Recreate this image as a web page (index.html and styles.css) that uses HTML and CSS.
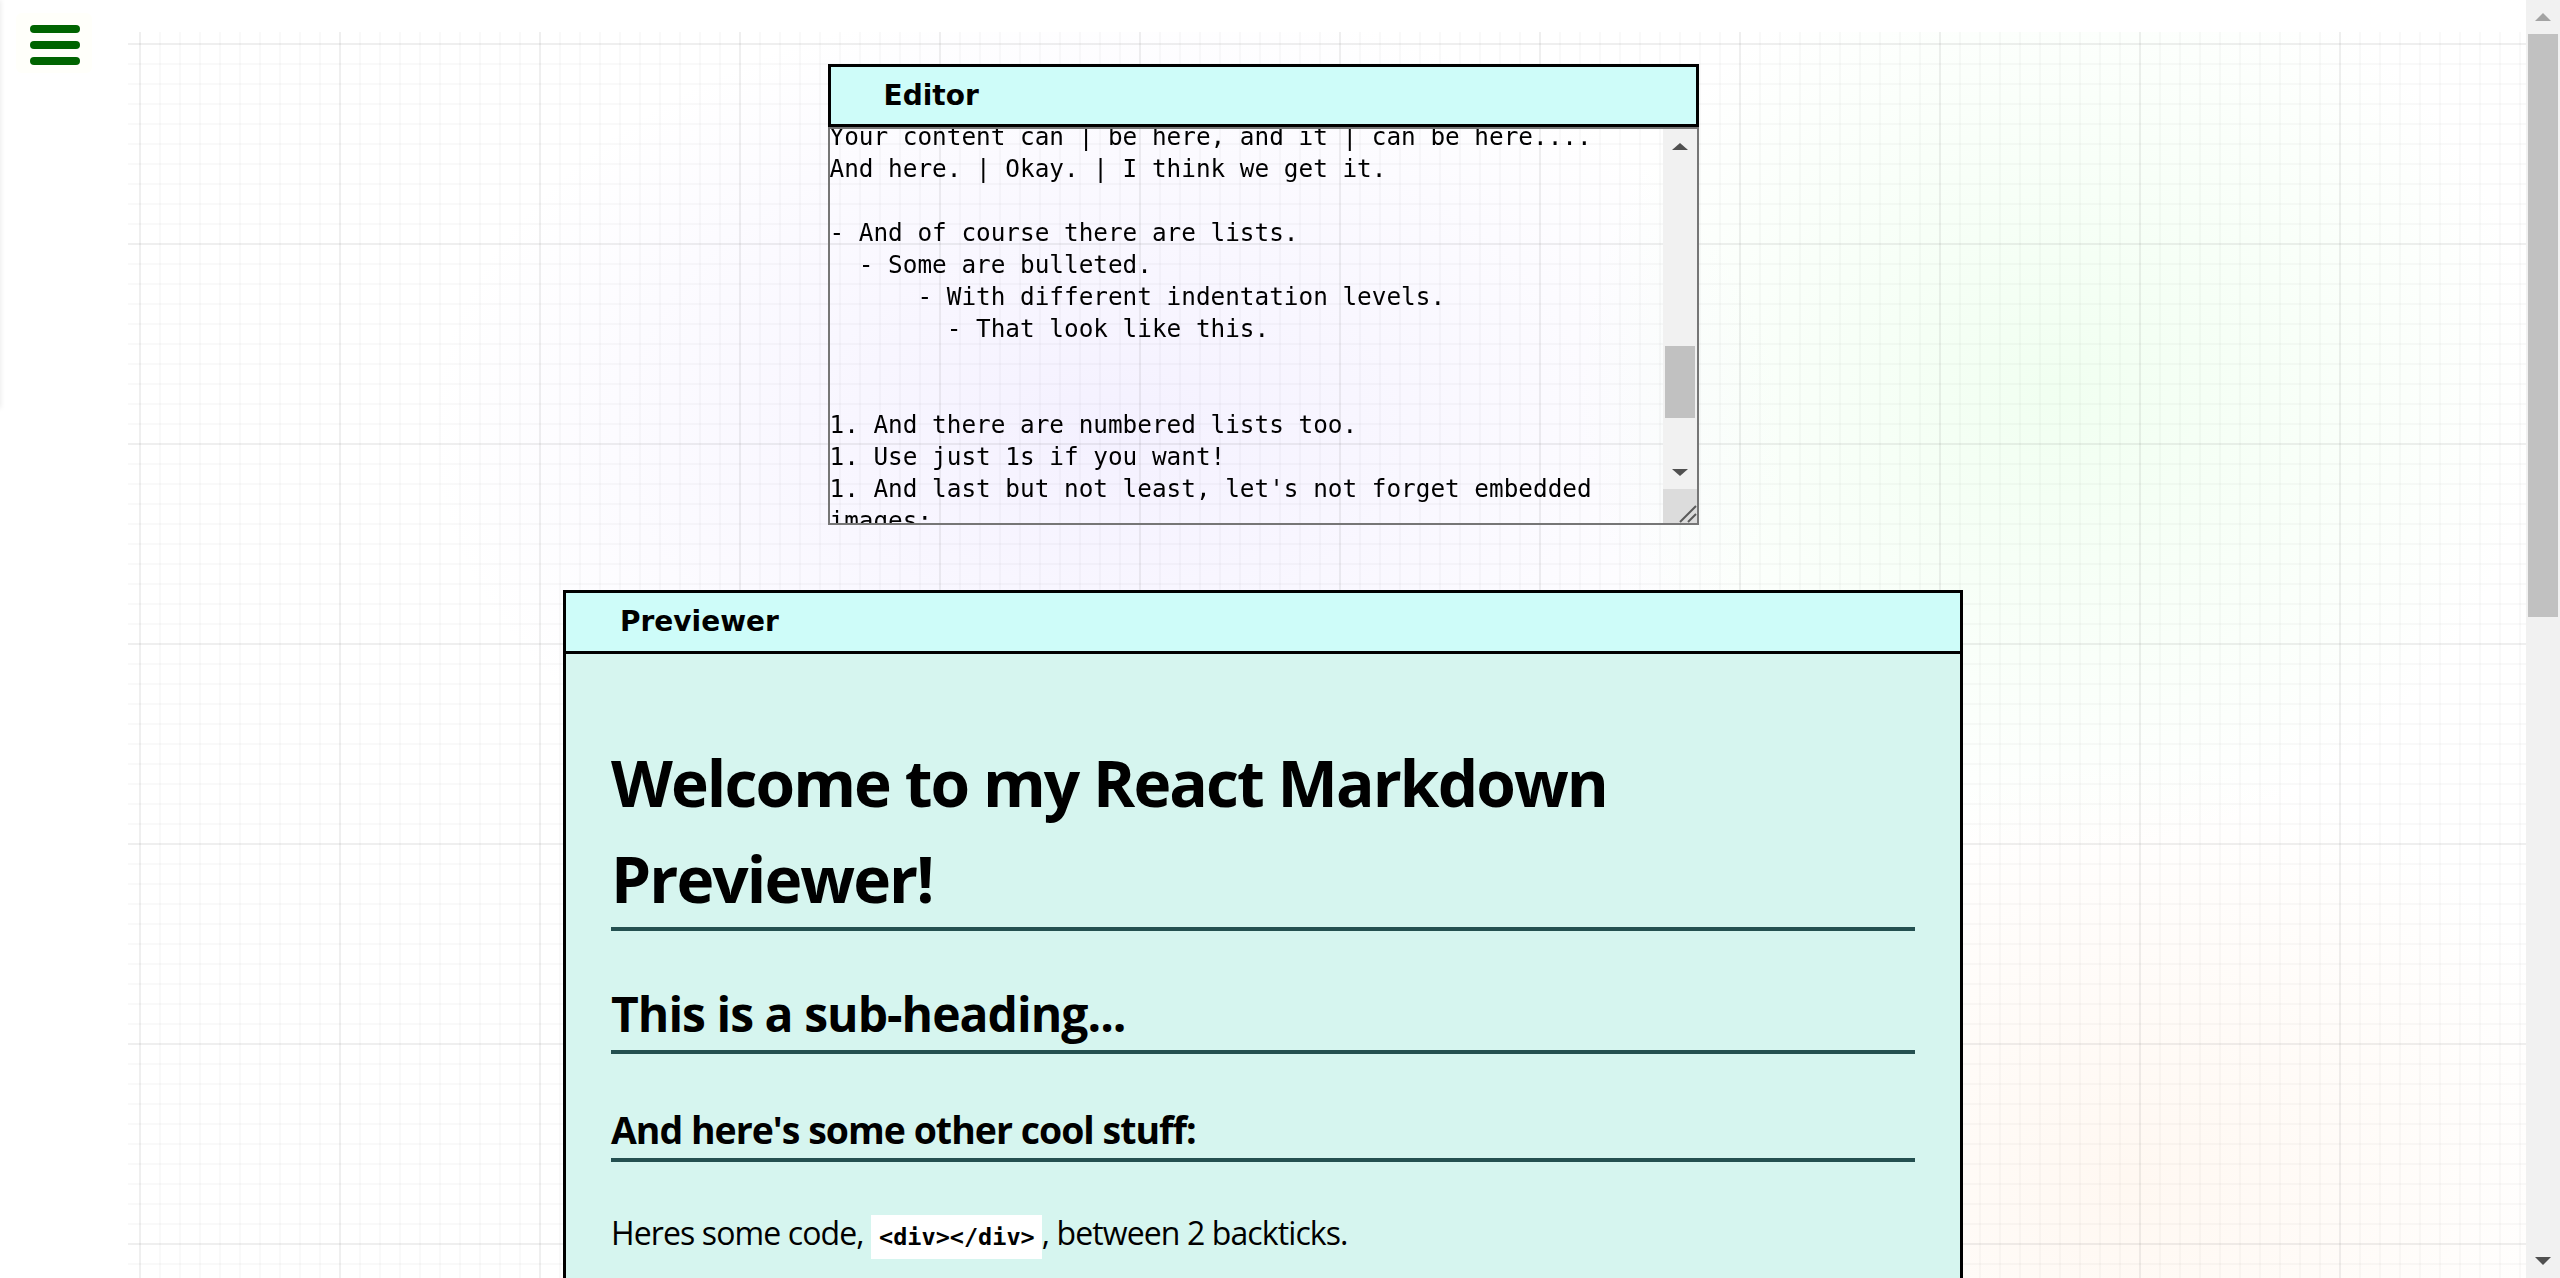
FILE: index.html
```html
<!DOCTYPE html>
<html lang="en">
<head>
<meta charset="utf-8">
<title>React Markdown Previewer</title>
<link rel="stylesheet" href="styles.css">
<script src="script.js" defer></script>
</head>
<body>
<div class="bg-grid" aria-hidden="true"></div>
<nav class="drawer" aria-hidden="true"></nav>
<button class="menu-toggle" type="button" aria-label="Open menu">
  <span class="bar"></span><span class="bar"></span><span class="bar"></span>
</button>

<div class="page-scrollbar" aria-hidden="true">
  <div class="sb-btn"><svg width="16" height="8" viewBox="0 0 16 8"><path d="M0 8 L8 0 L16 8 Z" fill="#a3a3a3"/></svg></div>
  <div class="sb-track"><div class="sb-thumb page-thumb"></div></div>
  <div class="sb-btn"><svg width="16" height="8" viewBox="0 0 16 8"><path d="M0 0 L8 8 L16 0 Z" fill="#505050"/></svg></div>
</div>

<main class="app">
  <section class="editor-wrap">
    <div class="toolbar">Editor</div>
    <div class="editor-body">
      <textarea id="editor" spellcheck="false"># Welcome to my React Markdown Previewer!

## This is a sub-heading...
### And here's some other cool stuff:

Heres some code, &#96;&lt;div&gt;&lt;/div&gt;&#96;, between 2 backticks.

&#96;&#96;&#96;
// this is multi-line code:

function anotherExample(firstLine, lastLine) {
  if (firstLine == '&#96;&#96;&#96;' &amp;&amp; lastLine == '&#96;&#96;&#96;') {
    return multiLineCode;
  }
}
&#96;&#96;&#96;

You can also make text **bold**... whoa!
Or _italic_.
Or... wait for it... **_both!_**
And feel free to go crazy ~~crossing stuff out~~.

There's also [links](https://www.freecodecamp.org), and

> Block Quotes!

And if you want to get really crazy, even tables:

Wild Header | Crazy Header | Another Header?
------------ | ------------- | -------------
Your content can | be here, and it | can be here....
And here. | Okay. | I think we get it.

- And of course there are lists.
  - Some are bulleted.
      - With different indentation levels.
        - That look like this.


1. And there are numbered lists too.
1. Use just 1s if you want!
1. And last but not least, let's not forget embedded images:

![freeCodeCamp Logo](https://cdn.freecodecamp.org/testable-projects-fcc/images/fcc_secondary.svg)



</textarea>
      <div class="ta-scrollbar" aria-hidden="true">
        <div class="sb-btn ta-btn"><svg width="16" height="7" viewBox="0 0 16 7"><path d="M0 7 L8 0 L16 7 Z" fill="#505050"/></svg></div>
        <div class="sb-track"><div class="sb-thumb ta-thumb"></div></div>
        <div class="sb-btn ta-btn"><svg width="16" height="7" viewBox="0 0 16 7"><path d="M0 0 L8 7 L16 0 Z" fill="#505050"/></svg></div>
        <div class="ta-resizer"><svg width="34" height="34" viewBox="0 0 34 34"><path d="M17 33 L33 17 M25 33 L33 25" stroke="#5a5a5a" stroke-width="2" fill="none"/></svg></div>
      </div>
    </div>
  </section>

  <section class="preview-wrap">
    <div class="toolbar toolbar-preview">Previewer</div>
    <div id="preview" class="preview">
      <h1>Welcome to my React Markdown Previewer!</h1>
      <h2>This is a sub-heading...</h2>
      <h3>And here's some other cool stuff:</h3>
      <p>Heres some code, <code>&lt;div&gt;&lt;/div&gt;</code>, between 2 backticks.</p>
      <pre><code>// this is multi-line code:

function anotherExample(firstLine, lastLine) {
  if (firstLine == '&#96;&#96;&#96;' &amp;&amp; lastLine == '&#96;&#96;&#96;') {
    return multiLineCode;
  }
}</code></pre>
      <p>You can also make text <strong>bold</strong>... whoa!<br>Or <em>italic</em>.<br>Or... wait for it... <strong><em>both!</em></strong><br>And feel free to go crazy <del>crossing stuff out</del>.</p>
      <p>There's also <a href="https://www.freecodecamp.org">links</a>, and</p>
      <blockquote><p>Block Quotes!</p></blockquote>
      <p>And if you want to get really crazy, even tables:</p>
      <table>
        <thead><tr><th>Wild Header</th><th>Crazy Header</th><th>Another Header?</th></tr></thead>
        <tbody>
          <tr><td>Your content can</td><td>be here, and it</td><td>can be here....</td></tr>
          <tr><td>And here.</td><td>Okay.</td><td>I think we get it.</td></tr>
        </tbody>
      </table>
      <ul>
        <li>And of course there are lists.
          <ul>
            <li>Some are bulleted.
              <ul>
                <li>With different indentation levels.
                  <ul><li>That look like this.</li></ul>
                </li>
              </ul>
            </li>
          </ul>
        </li>
      </ul>
      <ol>
        <li>And there are numbered lists too.</li>
        <li>Use just 1s if you want!</li>
        <li>And last but not least, let's not forget embedded images:</li>
      </ol>
      <p class="logo-line">
        <svg class="fcc-logo" viewBox="0 0 300 60" width="600" height="120" role="img" aria-label="freeCodeCamp Logo">
          <rect width="300" height="60" fill="#0a0a23"/>
          <path d="M30 14 C22 22 22 38 30 46" stroke="#fff" stroke-width="4" fill="none"/>
          <path d="M70 14 C78 22 78 38 70 46" stroke="#fff" stroke-width="4" fill="none"/>
          <path d="M50 16 C60 26 44 30 50 44 C40 40 40 28 50 16 Z" fill="#fff"/>
          <text x="92" y="38" fill="#fff" font-family="Lato, sans-serif" font-size="20" font-weight="700">freeCodeCamp</text>
        </svg>
      </p>
    </div>
  </section>
</main>
</body>
</html>
```

FILE: styles.css
```css
html {
  background: #ffffff;
}

body {
  margin: 0;
  font-family: "Open Sans", "Noto Sans", sans-serif;
  color: #000;
}

/* ---------- decorative background ---------- */
.bg-grid {
  position: fixed;
  left: 128px;
  top: 32px;
  right: 0;
  bottom: 0;
  z-index: -1;
  background-color: #ffffff;
  background-image:
    linear-gradient(to right, rgba(0, 0, 0, 0.04) 2px, transparent 2px),
    linear-gradient(to bottom, rgba(0, 0, 0, 0.04) 2px, transparent 2px),
    linear-gradient(to right, rgba(0, 0, 0, 0.024) 2px, transparent 2px),
    linear-gradient(to bottom, rgba(0, 0, 0, 0.024) 2px, transparent 2px),
    radial-gradient(680px 440px at 980px 400px, rgba(190, 170, 255, 0.17), rgba(190, 170, 255, 0) 100%),
    radial-gradient(480px 460px at 1930px 360px, rgba(170, 255, 170, 0.17), rgba(170, 255, 170, 0) 100%),
    radial-gradient(480px 420px at 2000px 1150px, rgba(255, 205, 160, 0.14), rgba(255, 205, 160, 0) 100%);
  background-size: 200px 200px, 200px 200px, 20px 20px, 20px 20px, auto, auto, auto;
  background-position: 11px 11px, 11px 11px, 11px 11px, 11px 11px, 0 0, 0 0, 0 0;
  background-repeat: repeat, repeat, repeat, repeat, no-repeat, no-repeat, no-repeat;
}

.drawer {
  position: fixed;
  left: -320px;
  top: 0;
  width: 320px;
  height: 408px;
  background: #fff;
  box-shadow: 1px 0 5px rgba(0, 0, 0, 0.08);
}

/* ---------- menu toggle ---------- */
.menu-toggle {
  position: fixed;
  left: 16px;
  top: 13px;
  z-index: 5;
  display: flex;
  flex-direction: column;
  gap: 8px;
  padding: 12px 12px 8px 14px;
  border: 0;
  border-radius: 6px;
  background: #fffffa;
  cursor: pointer;
}
.menu-toggle .bar {
  display: block;
  width: 50px;
  height: 8px;
  border-radius: 4px;
  background: #006400;
}

/* ---------- scrollbars (drawn) ---------- */
.page-scrollbar {
  position: fixed;
  top: 0;
  right: 0;
  bottom: 0;
  z-index: 10;
  width: 34px;
  display: flex;
  flex-direction: column;
  background: #f1f1f1;
}
.sb-btn {
  flex: none;
  height: 34px;
  display: flex;
  align-items: center;
  justify-content: center;
}
.sb-track {
  flex: 1;
  display: flex;
  flex-direction: column;
}
.sb-thumb {
  flex: none;
  margin: 0 2px;
  background: #c1c1c1;
}
.page-thumb {
  height: 583px;
}

.editor-body {
  position: relative;
}
.ta-scrollbar {
  position: absolute;
  top: 2px;
  right: 2px;
  bottom: 2px;
  width: 34px;
  display: flex;
  flex-direction: column;
  background: #f1f1f1;
}
.ta-thumb {
  margin-top: 183px;
  height: 72px;
}
.ta-resizer {
  flex: none;
  height: 34px;
  background: #dcdcdc;
}
.ta-resizer svg {
  display: block;
}

/* ---------- layout ---------- */
.app {
  display: flex;
  flex-direction: column;
  align-items: center;
  gap: 65px;
  padding: 64px 34px 420px 0;
}

.toolbar {
  box-sizing: border-box;
  background: #cefcf9;
  border: 3px solid #000;
  padding-left: 53px;
  font-family: "DejaVu Sans", sans-serif;
  font-weight: 700;
  font-size: 28px;
  line-height: 57px;
  color: #000;
}

.editor-wrap {
  width: 871px;
}

#editor {
  display: block;
  box-sizing: border-box;
  width: 871px;
  height: 398px;
  margin: 0;
  padding: 0 34px 0 0;
  border: 2px solid #767676;
  background: transparent;
  color: #000;
  font-family: "DejaVu Sans Mono", monospace;
  font-size: 24.35px;
  line-height: 32px;
  overflow-y: scroll;
  resize: none;
  outline: none;
}

.ta-mirror {
  position: absolute;
  left: 0;
  top: 0;
  visibility: hidden;
  padding: 0;
  font-family: "DejaVu Sans Mono", monospace;
  font-size: 24.35px;
  line-height: 32px;
  white-space: pre-wrap;
  overflow-wrap: break-word;
}

.preview-wrap {
  box-sizing: border-box;
  width: 1400px;
  border: 3px solid #000;
  background: #d6f5ef;
}

.toolbar-preview {
  border: 0;
  border-bottom: 3px solid #000;
  line-height: 58px;
  padding-left: 54px;
}

/* ---------- preview content ---------- */
.preview {
  padding: 40px 45px 60px;
  font-size: 32px;
  line-height: 1.5;
}

.preview h1,
.preview h2,
.preview h3 {
  font-weight: 700;
  line-height: 1.5;
  border-bottom: 4px solid #245050;
}
.preview h1 {
  font-size: 64px;
  margin: 41px 0 0;
  letter-spacing: -0.03em;
}
.preview h2 {
  font-size: 48px;
  margin: 47px 0 0;
  letter-spacing: -0.02em;
}
.preview h3 {
  font-size: 37.44px;
  margin: 48px 0 0;
  letter-spacing: -0.026em;
}
.preview p {
  margin: 47px 0 0;
  letter-spacing: -0.028em;
}
.preview code {
  font-family: "DejaVu Sans Mono", monospace;
  font-weight: 700;
  font-size: 23.5px;
  letter-spacing: 0;
  background: #fff;
  padding: 8px 7px 8px 8px;
}
.preview pre {
  margin: 47px 0 0;
  padding: 20px 24px;
  background: #fff;
  line-height: 40px;
}
.preview pre code {
  padding: 0;
}
.preview a {
  color: #0645ad;
}
.preview blockquote {
  margin: 47px 0 0;
  padding-left: 30px;
  border-left: 8px solid #245050;
}
.preview blockquote p {
  margin: 0;
}
.preview table {
  margin-top: 47px;
  border-collapse: collapse;
}
.preview th,
.preview td {
  border: 2px solid #245050;
  padding: 6px 16px;
}
.preview ul,
.preview ol {
  margin: 47px 0 0;
  padding-left: 64px;
}
.preview li ul {
  margin: 0;
}
.logo-line {
  line-height: 0;
}
.fcc-logo {
  display: block;
}
```

FILE: script.js
```js
function placeEditorScroll() {
  var ta = document.getElementById('editor');
  var marker = 'Your content can';
  var idx = ta.value.indexOf(marker);
  if (idx < 0) return;
  var mirror = document.createElement('div');
  mirror.className = 'ta-mirror';
  mirror.style.width = (ta.clientWidth - 34) + 'px';
  mirror.textContent = ta.value.slice(0, idx);
  document.body.appendChild(mirror);
  var top = mirror.offsetHeight;
  document.body.removeChild(mirror);
  ta.scrollTop = top + 8;
}
placeEditorScroll();
if (document.fonts && document.fonts.ready) {
  document.fonts.ready.then(placeEditorScroll);
}
```
